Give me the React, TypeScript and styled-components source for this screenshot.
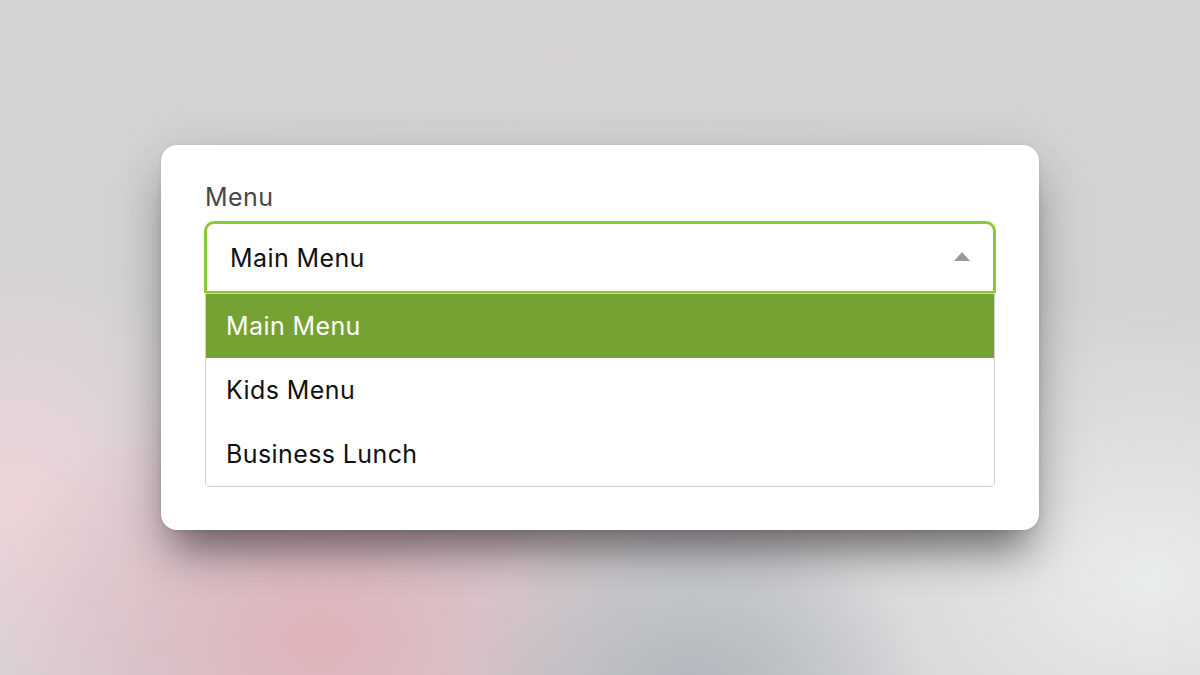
import styled, { createGlobalStyle } from "styled-components";

const GlobalStyle = createGlobalStyle`
  html, body {
    margin: 0;
    height: 100%;
  }
  #root {
    height: 100%;
  }
  body {
    font-family: Inter, "Noto Sans", "Liberation Sans", sans-serif;
  }
`;

const Backdrop = styled.div`
  height: 100%;
  display: flex;
  align-items: center;
  justify-content: center;
  background:
    radial-gradient(ellipse 320px 260px at 690px 700px, rgba(176, 182, 188, 1), transparent 75%),
    radial-gradient(ellipse 460px 360px at 320px 640px, rgba(224, 178, 186, 1), transparent 75%),
    radial-gradient(ellipse 280px 340px at 20px 500px, rgba(238, 212, 216, 0.95), transparent 75%),
    radial-gradient(ellipse 520px 380px at 1150px 580px, rgba(232, 236, 234, 1), transparent 75%),
    radial-gradient(ellipse 500px 220px at 560px 60px, rgba(214, 210, 210, 0.8), transparent 70%),
    linear-gradient(180deg, #d4d4d5 0%, #d0d1d3 100%);
`;

const Card = styled.div`
  width: 878px;
  box-sizing: border-box;
  padding: 38px 44px 43px;
  background: #fff;
  border-radius: 16px;
  box-shadow:
    0 30px 40px -12px rgba(40, 30, 35, 0.55),
    0 12px 60px rgba(0, 0, 0, 0.14),
    0 1px 4px rgba(0, 0, 0, 0.08);
`;

const Label = styled.div`
  font-size: 25px;
  letter-spacing: 0.4px;
  line-height: 29px;
  color: #474747;
  margin-bottom: 9px;
`;

const Trigger = styled.div`
  height: 72px;
  box-sizing: border-box;
  display: flex;
  align-items: center;
  justify-content: space-between;
  margin: 0 -1px;
  padding: 0 23px 0 23px;
  border: 3px solid #8cc83e;
  border-bottom-width: 2px;
  border-radius: 10px 10px 0 0;
  font-size: 25px;
  letter-spacing: 0.4px;
  color: #111;
`;

const Caret = styled.span`
  width: 0;
  height: 0;
  border-left: 8px solid transparent;
  border-right: 8px solid transparent;
  border-bottom: 9px solid #999;
  margin-top: -2px;
`;

const List = styled.ul`
  list-style: none;
  margin: 0;
  padding: 0;
  border: 1px solid #cfcfd2;
  border-radius: 0 0 4px 4px;
  overflow: hidden;
`;

const Option = styled.li<{ $active?: boolean }>`
  height: 64px;
  display: flex;
  align-items: center;
  padding-left: 20px;
  font-size: 25px;
  letter-spacing: 0.4px;
  color: ${(p) => (p.$active ? "#fff" : "#111")};
  background: ${(p) => (p.$active ? "#76a234" : "#fff")};
`;

const options = ["Main Menu", "Kids Menu", "Business Lunch"];

export default function App() {
  const selected = "Main Menu";
  return (
    <>
      <GlobalStyle />
      <Backdrop>
        <Card>
          <Label>Menu</Label>
          <Trigger>
            <span>{selected}</span>
            <Caret />
          </Trigger>
          <List>
            {options.map((o) => (
              <Option key={o} $active={o === selected}>
                {o}
              </Option>
            ))}
          </List>
        </Card>
      </Backdrop>
    </>
  );
}
